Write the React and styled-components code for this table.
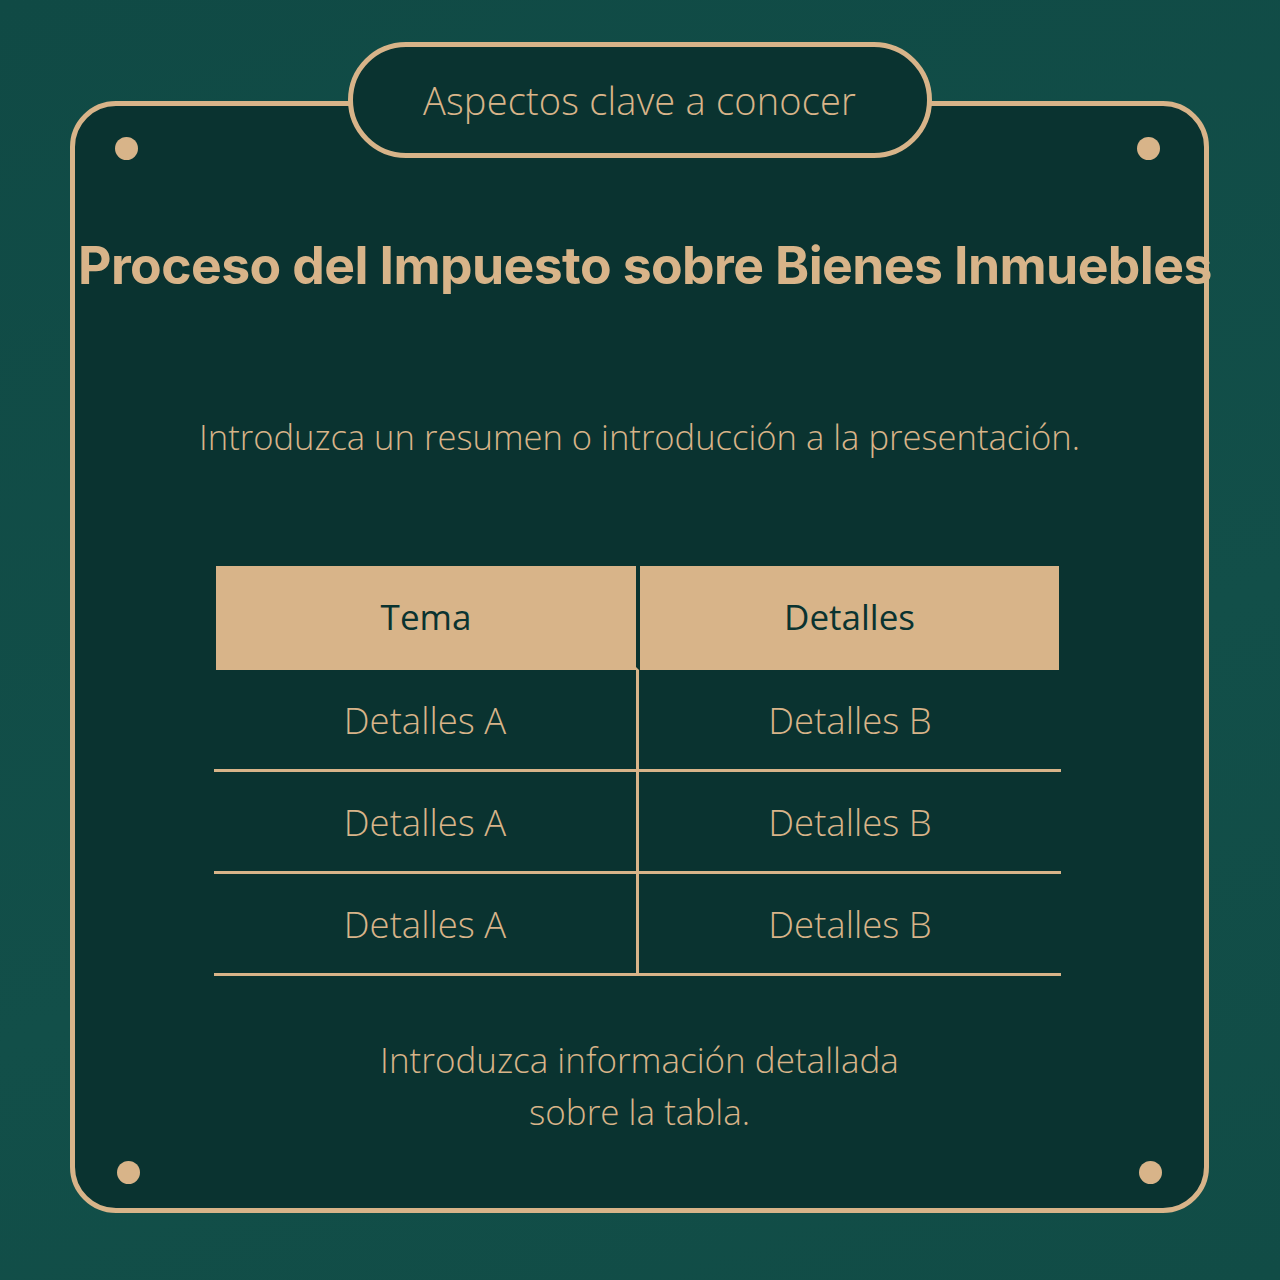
import React from "react";
import styled, { createGlobalStyle } from "styled-components";

const GOLD = "#d8b489";
const DARK = "#0a3330";

const Global = createGlobalStyle`
  html, body { margin: 0; padding: 0; }
  body {
    width: 1280px;
    height: 1280px;
    background: linear-gradient(160deg, #104a45 0%, #124f49 60%, #114c46 100%);
    font-family: "Open Sans", "Noto Sans", sans-serif;
  }
  #root { width: 1280px; height: 1280px; }
`;

const Page = styled.div`
  width: 1280px;
  height: 1280px;
  padding: 101px 0 0 70px;
  box-sizing: border-box;
`;

const Card = styled.section`
  position: relative;
  width: 1139px;
  height: 1112px;
  box-sizing: border-box;
  border: 5px solid ${GOLD};
  border-radius: 46px;
  background: ${DARK};
  display: flex;
  flex-direction: column;
  padding-top: 129px;
`;

const Pill = styled.div`
  position: absolute;
  top: -64px;
  left: 50%;
  transform: translateX(-50%);
  width: 584px;
  height: 116px;
  box-sizing: border-box;
  border: 5px solid ${GOLD};
  border-radius: 58px;
  background: ${DARK};
  display: flex;
  align-items: center;
  justify-content: center;
  color: ${GOLD};
  font-size: 38px;
  font-weight: 350;
  letter-spacing: 0.2px;
`;

const Dot = styled.span`
  position: absolute;
  width: 23px;
  height: 23px;
  border-radius: 50%;
  background: ${GOLD};
  ${(p) => (p.$top ? `top: ${p.$top}px;` : "")}
  ${(p) => (p.$bottom ? `bottom: ${p.$bottom}px;` : "")}
  ${(p) => (p.$left ? `left: ${p.$left}px;` : "")}
  ${(p) => (p.$right ? `right: ${p.$right}px;` : "")}
`;

const Title = styled.h1`
  margin: 0;
  padding-left: 3px;
  white-space: nowrap;
  text-align: center;
  font-family: Inter, "Liberation Sans", sans-serif;
  font-weight: 700;
  font-size: 51.7px;
  line-height: 60px;
  letter-spacing: -0.6px;
  color: ${GOLD};
`;

const Lead = styled.p`
  margin: 120px 0 0;
  text-align: center;
  font-size: 34.6px;
  font-weight: 350;
  line-height: 44px;
  color: ${GOLD};
`;

const Table = styled.div`
  margin: 107px 0 0 139px;
  width: 847px;
  display: grid;
  grid-template-columns: 425px 422px;
`;

const HeadCell = styled.div`
  height: 101px;
  background: ${GOLD};
  border-bottom: 3px solid ${GOLD};
  border-right: ${(p) => (p.$first ? `3px solid ${DARK}` : "none")};
  margin: ${(p) => (p.$first ? "0 0 0 2px" : "0 2px 0 1px")};
  display: flex;
  align-items: center;
  justify-content: center;
  color: ${DARK};
  font-size: 35px;
  font-weight: 400;
`;

const Cell = styled.div`
  height: 99px;
  border-bottom: 3px solid ${GOLD};
  border-right: ${(p) => (p.$first ? `3px solid ${GOLD}` : "none")};
  display: flex;
  align-items: center;
  justify-content: center;
  color: ${GOLD};
  font-size: 36.5px;
  font-weight: 350;
`;

const Note = styled.p`
  margin: 58px 0 0;
  text-align: center;
  font-size: 35px;
  font-weight: 350;
  line-height: 52px;
  color: ${GOLD};
`;

const rows = [
  ["Detalles A", "Detalles B"],
  ["Detalles A", "Detalles B"],
  ["Detalles A", "Detalles B"],
];

export default function App() {
  return (
    <>
      <Global />
      <Page>
        <Card>
          <Pill>Aspectos clave a conocer</Pill>
          <Dot $top={31} $left={40} />
          <Dot $top={31} $right={44} />
          <Dot $bottom={24} $left={42} />
          <Dot $bottom={24} $right={42} />
          <Title>Proceso del Impuesto sobre Bienes Inmuebles</Title>
          <Lead>Introduzca un resumen o introducción a la presentación.</Lead>
          <Table>
            <HeadCell $first>Tema</HeadCell>
            <HeadCell>Detalles</HeadCell>
            {rows.map((r, i) => (
              <React.Fragment key={i}>
                <Cell $first>{r[0]}</Cell>
                <Cell>{r[1]}</Cell>
              </React.Fragment>
            ))}
          </Table>
          <Note>
            Introduzca información detallada
            <br />
            sobre la tabla.
          </Note>
        </Card>
      </Page>
    </>
  );
}
